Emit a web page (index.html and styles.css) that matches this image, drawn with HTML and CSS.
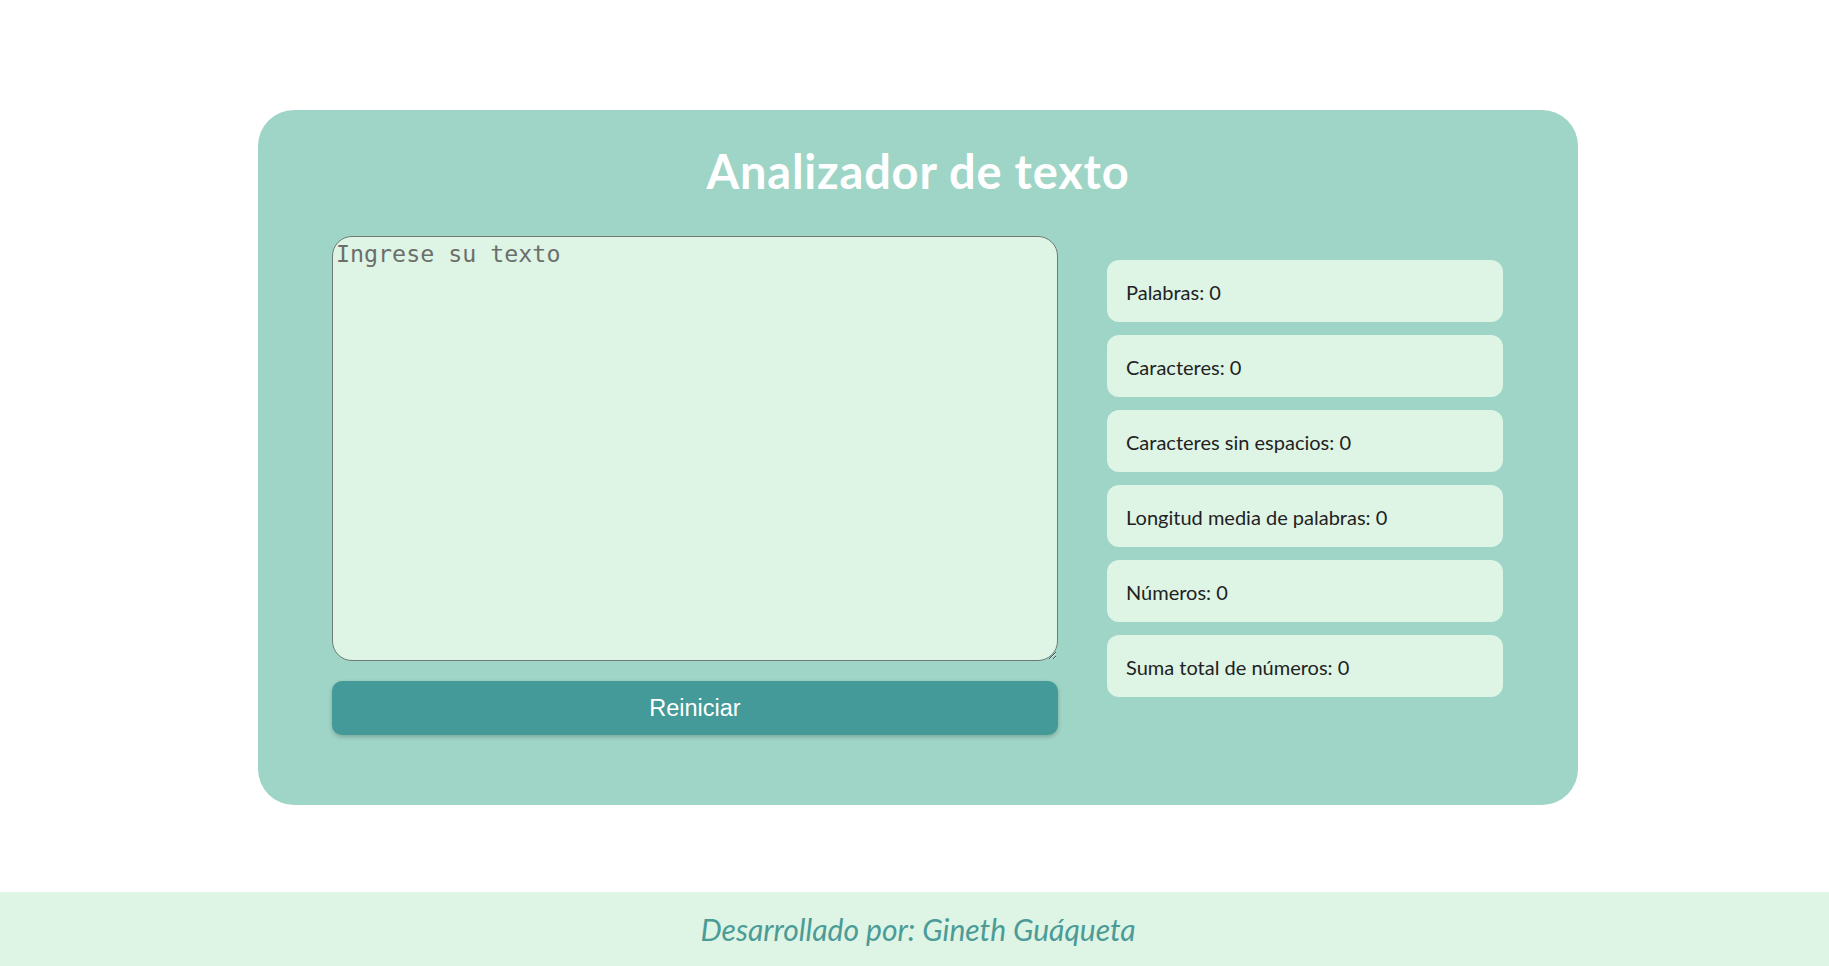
FILE: index.html
```html
<!DOCTYPE html>
<html lang="es">
<head>
<meta charset="utf-8">
<title>Analizador de texto</title>
<link rel="stylesheet" href="styles.css">
</head>
<body>
<main class="page">
  <section class="card">
    <h1 class="title">Analizador de texto</h1>
    <div class="content">
      <div class="input-col">
        <textarea class="text-input" placeholder="Ingrese su texto"></textarea>
        <button class="reset-btn" type="button">Reiniciar</button>
      </div>
      <ul class="stats">
        <li class="stat">Palabras: 0</li>
        <li class="stat">Caracteres: 0</li>
        <li class="stat">Caracteres sin espacios: 0</li>
        <li class="stat">Longitud media de palabras: 0</li>
        <li class="stat">Números: 0</li>
        <li class="stat">Suma total de números: 0</li>
      </ul>
    </div>
  </section>
</main>
<footer class="footer">
  <p class="credit">Desarrollado por: Gineth Guáqueta</p>
</footer>
</body>
</html>
```
FILE: styles.css
```css
* { box-sizing: border-box; }

html, body {
  margin: 0;
  padding: 0;
  background: #ffffff;
  font-family: "Lato", "Noto Sans", sans-serif;
}

.page {
  padding: 110px 0 87px 0;
}

.card {
  width: 1320px;
  margin: 0 0 0 258px;
  background: #9fd5c6;
  border-radius: 36px;
  padding: 34px 74px 70px 74px;
}

.title {
  margin: 0 0 37px 0;
  text-align: center;
  color: #ffffff;
  font-family: "Lato", sans-serif;
  font-weight: 700;
  font-size: 47px;
  line-height: 55px;
  letter-spacing: 0.8px;
}

.content {
  display: flex;
  align-items: flex-start;
  gap: 49px;
}

.input-col {
  width: 726px;
  display: flex;
  flex-direction: column;
  gap: 20px;
}

.text-input {
  display: block;
  width: 726px;
  height: 425px;
  margin: 0;
  padding: 3px 3px;
  background: #def4e5;
  border: 1px solid #6f7a76;
  border-radius: 20px;
  font-family: "DejaVu Sans Mono", monospace;
  font-size: 23.3px;
  color: #333;
  resize: both;
}

.text-input::placeholder {
  color: #6b6f6c;
}

.reset-btn {
  width: 726px;
  height: 54px;
  margin: 0;
  border: none;
  border-radius: 10px;
  background: #449a98;
  color: #ffffff;
  font-family: "Liberation Sans", Arial, sans-serif;
  font-size: 23.5px;
  box-shadow: 0 2px 4px rgba(0, 0, 0, 0.22);
}

.stats {
  list-style: none;
  margin: 24px 0 0 0;
  padding: 0;
  width: 396px;
  display: flex;
  flex-direction: column;
  gap: 13px;
}

.stat {
  height: 62px;
  display: flex;
  align-items: center;
  padding: 2px 19px 0 19px;
  background: #def4e5;
  border-radius: 12px;
  color: #222222;
  font-family: "Lato", sans-serif;
  font-size: 20px;
}

.footer {
  background: #def4e5;
  height: 74px;
  display: flex;
  align-items: center;
  justify-content: center;
  padding-left: 7px;
}

.credit {
  margin: 0;
  font-family: "Lato", sans-serif;
  font-style: italic;
  font-size: 30px;
  color: #4b9b97;
}
```
